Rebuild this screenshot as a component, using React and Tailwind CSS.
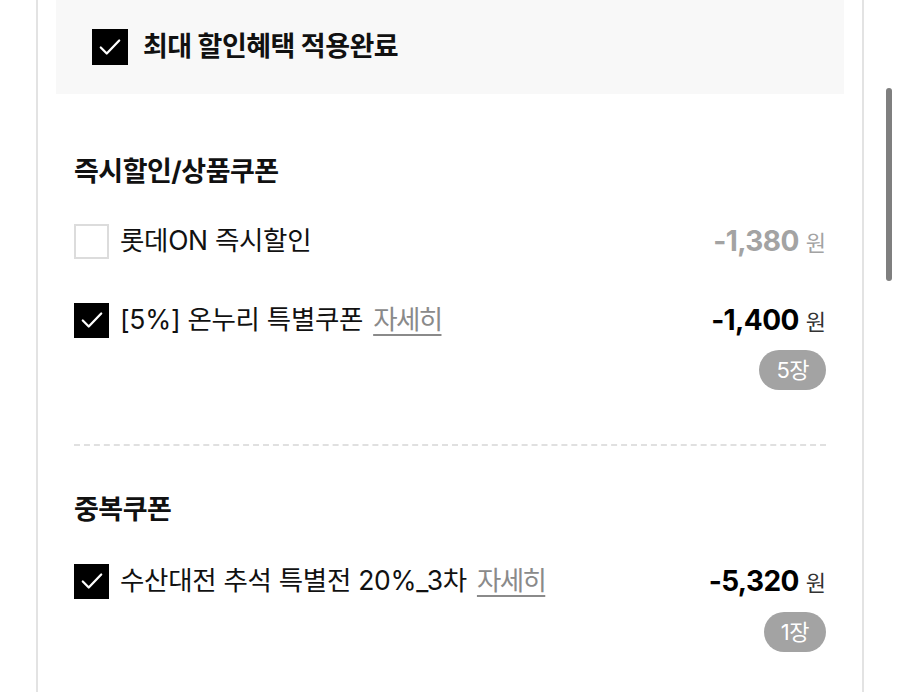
import React from 'react';

const font = { fontFamily: 'Inter, "Noto Sans CJK KR", sans-serif' };

const Check = () => (
  <svg width="26" height="26" viewBox="0 0 24 24" fill="none" stroke="white" strokeWidth="2.1" strokeLinecap="round" strokeLinejoin="round">
    <path d="M3.5 12.5l5.5 5.5L20.5 6" />
  </svg>
);

const CheckBox = ({ checked }) =>
  checked ? (
    <div className="w-[35px] h-[35px] bg-black flex items-center justify-center shrink-0">
      <Check />
    </div>
  ) : (
    <div className="w-[35px] h-[35px] border-2 border-[#dcdcdc] bg-white shrink-0" />
  );

const Price = ({ value, muted }) => (
  <div className="flex items-baseline gap-[7px]">
    <span className={`text-[28px] font-bold tracking-[-0.6px] ${muted ? 'text-[#a3a3a3]' : 'text-black'}`}>{value}</span>
    <span className={`text-[22px] ${muted ? 'text-[#a3a3a3]' : 'text-[#333]'}`}>원</span>
  </div>
);

const Badge = ({ children }) => (
  <div className="flex justify-end">
    <span className="h-[40px] px-[17px] rounded-full bg-[#a3a3a3] text-white text-[22px] flex items-center tracking-[-0.5px]">{children}</span>
  </div>
);

const CouponRow = ({ checked, label, detail, value, muted }) => (
  <div className="flex items-center justify-between h-[36px]">
    <div className="flex items-center gap-[11px]">
      <CheckBox checked={checked} />
      <span className="text-[26.5px] text-[#111] tracking-[-0.3px] whitespace-nowrap">
        {label}
        {detail && <span className="ml-[10px] text-[#8a8a8a] tracking-[-1.6px] underline underline-offset-[5px] decoration-[1.5px]">자세히</span>}
      </span>
    </div>
    <Price value={value} muted={muted} />
  </div>
);

export default function App() {
  return (
    <div className="relative w-[900px] h-[692px] bg-white overflow-hidden" style={font}>
      <div className="ml-[36px] w-[828px] h-full border-x-2 border-[#e3e3e3] px-[18px]">
        {/* 최대 할인 헤더 */}
        <div className="h-[94px] bg-[#f8f8f8] flex items-center pl-[36px] gap-[15px]">
          <div className="w-[36px] h-[36px] bg-black flex items-center justify-center">
            <Check />
          </div>
          <span className="text-[27px] font-bold text-[#111] tracking-[-0.5px]">최대 할인혜택 적용완료</span>
        </div>

        {/* 즉시할인/상품쿠폰 */}
        <div className="px-[18px]">
          <div className="pt-[62px] h-[94px] text-[27px] font-bold text-[#111] leading-[32px] tracking-[-0.5px]">즉시할인/상품쿠폰</div>
          <div className="mt-[35px]">
            <CouponRow checked={false} label="롯데ON 즉시할인" value="-1,380" muted />
          </div>
          <div className="mt-[43px]">
            <CouponRow checked label="[5%] 온누리 특별쿠폰" detail value="-1,400" />
          </div>
          <div className="mt-[12px]">
            <Badge>5장</Badge>
          </div>
          <div className="mt-[54px] border-t-2 border-dashed border-[#e0e0e0]" />

          {/* 중복쿠폰 */}
          <div className="mt-[48px] text-[27px] font-bold text-[#111] leading-[32px] tracking-[-0.5px]">중복쿠폰</div>
          <div className="mt-[37px]">
            <CouponRow checked label="수산대전 추석 특별전 20%_3차" detail value="-5,320" />
          </div>
          <div className="mt-[13px]">
            <Badge>1장</Badge>
          </div>
        </div>
      </div>

      {/* overlay scrollbar */}
      <div className="absolute left-[886px] top-[88px] w-[6px] h-[193px] rounded-full bg-[#7f7f7f]" />
    </div>
  );
}
